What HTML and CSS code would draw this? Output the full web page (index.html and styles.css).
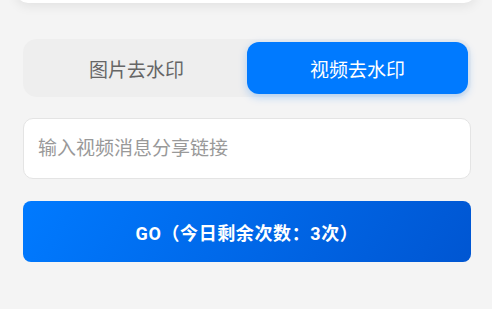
FILE: index.html
```html
<!DOCTYPE html>
<html lang="zh">
<head>
<meta charset="utf-8">
<link rel="stylesheet" href="styles.css">
</head>
<body>
<div class="top-card"></div>
<main class="content">
  <div class="tabs">
    <div class="tab">图片去水印</div>
    <div class="tab active">视频去水印</div>
  </div>
  <input class="link-input" type="text" placeholder="输入视频消息分享链接">
  <button class="go-btn">GO（今日剩余次数：3次）</button>
</main>
</body>
</html>
```
FILE: styles.css
```css
html, body {
  margin: 0;
  padding: 0;
  background: #f4f4f4;
  font-family: Roboto, "Noto Sans CJK SC", sans-serif;
}
.top-card {
  height: 40px;
  margin: -37px 16px 0 16px;
  background: #ffffff;
  border-radius: 12px;
  box-shadow: 0 3px 12px rgba(0, 0, 0, 0.08);
}
.content {
  margin: 36px 21px 0 23px;
  display: flex;
  flex-direction: column;
}
.tabs {
  display: flex;
  padding: 3px;
  background: #eeeeee;
  border-radius: 14px;
}
.tab {
  flex: 1;
  height: 52px;
  display: flex;
  align-items: center;
  justify-content: center;
  font-size: 19px;
  color: #666666;
  border-radius: 12px;
}
.tab.active {
  background: #007aff;
  color: #ffffff;
  box-shadow: 0 3px 8px rgba(0, 122, 255, 0.28);
}
.link-input {
  margin-top: 21px;
  height: 61px;
  box-sizing: border-box;
  border: 1px solid #e4e4e4;
  border-radius: 10px;
  background: #ffffff;
  padding: 0 14px;
  font-family: inherit;
  font-size: 19px;
  color: #333;
  outline: none;
}
.link-input::placeholder {
  color: #999999;
}
.go-btn {
  margin-top: 22px;
  height: 61px;
  border: none;
  border-radius: 8px;
  background: linear-gradient(120deg, #007aff 0%, #0056d2 100%);
  color: #ffffff;
  font-family: inherit;
  font-size: 18px;
  font-weight: 700;
  letter-spacing: 0.6px;
  padding: 0;
}
```
